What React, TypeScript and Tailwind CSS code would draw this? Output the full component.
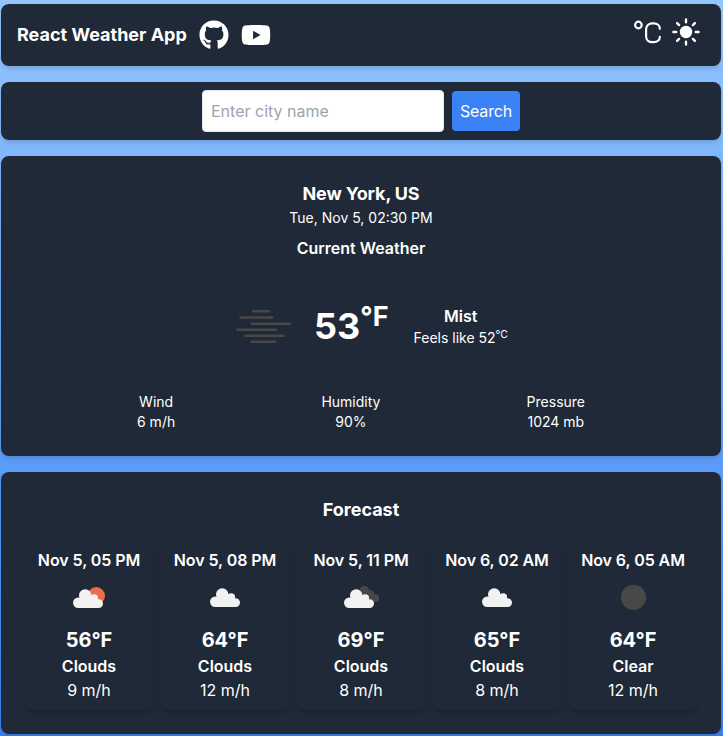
import React from 'react';
import { FaGithub, FaYoutube } from 'react-icons/fa';

type IconKind = 'sunCloud' | 'cloud' | 'darkCloud' | 'moon';

interface ForecastItem {
  time: string;
  icon: IconKind;
  temp: string;
  label: string;
  wind: string;
}

const forecast: ForecastItem[] = [
  { time: 'Nov 5, 05 PM', icon: 'sunCloud', temp: '56°F', label: 'Clouds', wind: '9 m/h' },
  { time: 'Nov 5, 08 PM', icon: 'cloud', temp: '64°F', label: 'Clouds', wind: '12 m/h' },
  { time: 'Nov 5, 11 PM', icon: 'darkCloud', temp: '69°F', label: 'Clouds', wind: '8 m/h' },
  { time: 'Nov 6, 02 AM', icon: 'cloud', temp: '65°F', label: 'Clouds', wind: '8 m/h' },
  { time: 'Nov 6, 05 AM', icon: 'moon', temp: '64°F', label: 'Clear', wind: '12 m/h' },
];

function Cloud({ x, y }: { x: number; y: number }) {
  return (
    <g transform={`translate(${x} ${y})`} fill="#f2f2f2">
      <circle cx="5.2" cy="13.8" r="5.2" />
      <circle cx="12.2" cy="6.4" r="6.2" />
      <circle cx="21.2" cy="9.2" r="3.9" />
      <circle cx="25.6" cy="14.6" r="4.4" />
      <path d="M5 19V12L8 8L17.5 6H20L22 8L25.6 12V19Z" />
    </g>
  );
}

function WeatherIcon({ kind }: { kind: IconKind }) {
  return (
    <svg width="50" height="50" viewBox="0 0 50 50" className="block">
      {kind === 'moon' && <circle cx="25.5" cy="25.3" r="12.6" fill="#484848" />}
      {kind === 'sunCloud' && (
        <>
          <circle cx="32.2" cy="23.9" r="8.8" fill="#ec6e4c" />
          <Cloud x={9} y={17} />
        </>
      )}
      {kind === 'darkCloud' && (
        <>
          <g fill="#484848">
            <circle cx="28.4" cy="18.6" r="4.6" />
            <circle cx="34.2" cy="22.2" r="3.9" />
            <circle cx="39.2" cy="26.2" r="3.9" />
            <path d="M24 19L36 19L41 28L36 29Z" />
          </g>
          <Cloud x={8} y={17} />
        </>
      )}
      {kind === 'cloud' && <Cloud x={10} y={16} />}
    </svg>
  );
}

function MistIcon() {
  return (
    <svg
      width="100"
      height="100"
      viewBox="0 0 100 100"
      className="block"
      stroke="#484848"
      strokeWidth="2.4"
      strokeLinecap="round"
    >
      <path d="M39 35.3H55.2M26.5 41.5H58.2M37.5 47.7H75.8M23.4 53.7H61.7M31.5 59.8H69.7M37.5 65.8H61.4" />
    </svg>
  );
}

function CelsiusIcon() {
  return (
    <svg width="30" height="30" viewBox="0 0 30 30" fill="none" stroke="currentColor" strokeLinecap="round">
      <circle cx="5.4" cy="8" r="3.3" strokeWidth="2.2" />
      <path
        d="M26.8 11.8V11.5C26.8 8.5 24.2 6.4 20.7 6.4H19.3C15.8 6.4 13.1 8.7 13.1 12V19.6C13.1 22.9 15.8 25.2 19.3 25.2H20.7C24.2 25.2 26.8 23.1 26.8 20.1V19.8"
        strokeWidth="2.2"
      />
    </svg>
  );
}

function SunIcon() {
  return (
    <svg width="30" height="30" viewBox="0 0 30 30" stroke="currentColor" strokeWidth="2.4" strokeLinecap="round">
      <circle cx="15" cy="15" r="6.2" fill="currentColor" stroke="none" />
      <path d="M15 2.4V5.2M15 24.8V27.6M2.4 15H5.2M24.8 15H27.6M6.1 6.1L8.1 8.1M21.9 21.9L23.9 23.9M6.1 23.9L8.1 21.9M21.9 8.1L23.9 6.1" />
    </svg>
  );
}

function Stat({ label, value }: { label: string; value: string }) {
  return (
    <div className="text-center text-sm">
      <p>{label}</p>
      <p>{value}</p>
    </div>
  );
}

const card = 'rounded-lg bg-[#1f2937] shadow-md';

export default function App() {
  return (
    <div className="h-[736px] overflow-hidden bg-linear-to-b from-[#93c5fd] to-[#3b82f6] pt-1 pl-px font-['Inter',sans-serif] text-white">
      <div className="flex w-[720px] flex-col gap-4">
        <header className={`${card} flex h-[62px] items-center justify-between p-4`}>
          <div className="flex items-center gap-3">
            <h1 className="w-[170px] text-lg font-bold whitespace-nowrap">React Weather App</h1>
            <FaGithub size={30} />
            <FaYoutube size={30} />
          </div>
          <div className="flex items-center gap-2 pr-1 pb-1.5">
            <CelsiusIcon />
            <SunIcon />
          </div>
        </header>

        <form className={`${card} flex items-center justify-center gap-2 p-2`}>
          <input
            type="text"
            placeholder="Enter city name"
            className="h-[42px] w-[242px] rounded border border-[#e5e7eb] bg-white p-2 text-base placeholder:text-[#9ca3af]"
          />
          <button type="button" className="w-[68px] rounded bg-[#3b82f6] py-2 text-base tracking-[-0.01em]">
            Search
          </button>
        </form>

        <section className={`${card} p-6`}>
          <div className="text-center">
            <h2 className="text-lg font-bold tracking-[-0.008em]">New York, US</h2>
            <p className="text-sm">Tue, Nov 5, 02:30 PM</p>
            <h3 className="mt-2 font-semibold">Current Weather</h3>
          </div>
          <div className="my-4 flex items-center justify-center">
            <MistIcon />
            <div className="text-4xl font-bold">
              53<sup>°F</sup>
            </div>
            <div className="ml-[25px] text-center">
              <p className="font-semibold">Mist</p>
              <p className="text-sm">
                Feels like 52<sup>°C</sup>
              </p>
            </div>
          </div>
          <div className="mx-auto flex w-md justify-between">
            <Stat label="Wind" value="6 m/h" />
            <Stat label="Humidity" value="90%" />
            <Stat label="Pressure" value="1024 mb" />
          </div>
        </section>

        <section className={`${card} p-6`}>
          <h2 className="mb-4 text-center text-lg font-bold">Forecast</h2>
          <div className="grid grid-cols-5 gap-2">
            {forecast.map((item) => (
              <div
                key={item.time}
                className="flex flex-col items-center rounded-lg p-2 shadow-[0_4px_6px_-1px_rgba(0,0,0,0.08),0_2px_4px_-2px_rgba(0,0,0,0.08)]"
              >
                <p className="font-semibold tracking-[-0.005em] whitespace-nowrap">{item.time}</p>
                <div className="mb-1">
                  <WeatherIcon kind={item.icon} />
                </div>
                <p className="text-xl font-bold">{item.temp}</p>
                <p className="font-semibold">{item.label}</p>
                <p>{item.wind}</p>
              </div>
            ))}
          </div>
        </section>
      </div>
    </div>
  );
}
